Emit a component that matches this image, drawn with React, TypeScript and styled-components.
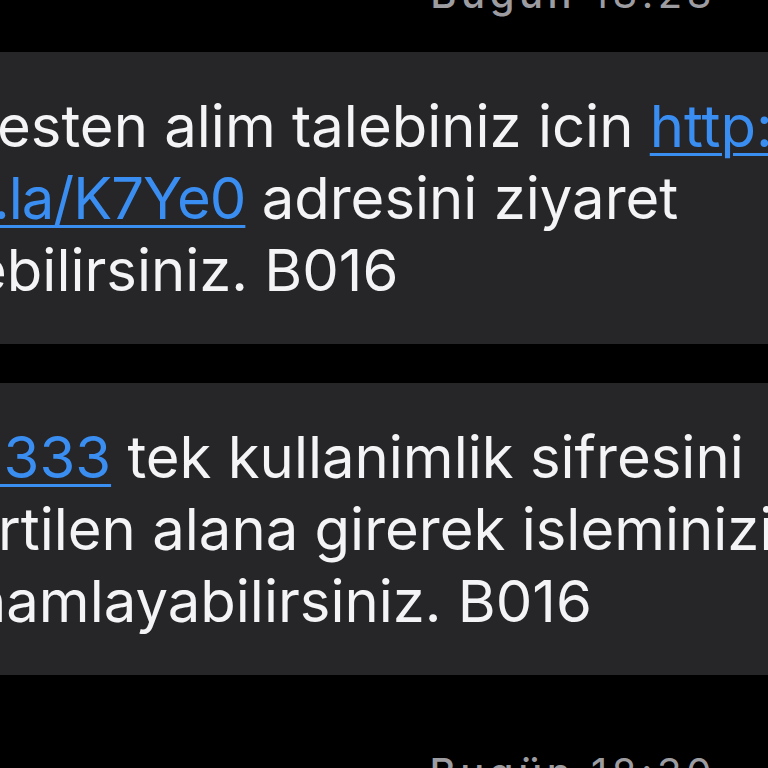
import React from "react";
import styled, { createGlobalStyle } from "styled-components";

const Global = createGlobalStyle`
  html, body { margin: 0; padding: 0; background: #000; }
  body { font-family: Inter, "Noto Sans", "Liberation Sans", sans-serif; }
`;

const Screen = styled.div`
  width: 768px;
  height: 768px;
  overflow: hidden;
  background: #000;
  display: flex;
  flex-direction: column;
`;

const Thread = styled.div`
  display: flex;
  flex-direction: column;
  margin-top: -30px;
`;

const Stamp = styled.div<{ $after: number }>`
  font-size: 40px;
  line-height: 48px;
  letter-spacing: 4.5px;
  color: #9c9ca1;
  text-align: right;
  padding-right: 52px;
  white-space: nowrap;
  margin-bottom: ${(p) => p.$after}px;
  b { font-weight: 500; }
`;

const Bubble = styled.div<{ $after: number }>`
  background: #262628;
  padding: 38px 0;
  margin-bottom: ${(p) => p.$after}px;
  display: flex;
  flex-direction: column;
`;

const Line = styled.div<{ $offset: number }>`
  font-size: 58px;
  line-height: 72px;
  color: #f4f4f6;
  white-space: nowrap;
  margin-left: ${(p) => p.$offset}px;
`;

const Link = styled.span<{ $tight?: boolean }>`
  color: #3a8ef2;
  text-decoration: underline;
  text-decoration-thickness: 3px;
  text-underline-offset: 6px;
  letter-spacing: ${(p) => (p.$tight ? "-1px" : "0")};
`;

export default function App() {
  return (
    <>
      <Global />
      <Screen>
        <Thread>
          <Stamp $after={34}>
            <b>Bugün</b> 18:28
          </Stamp>
          <Bubble $after={39}>
            <Line $offset={-3}>
              esten alim talebiniz icin <Link>http://</Link>
            </Line>
            <Line $offset={-7}>
              <Link $tight>.la/K7Ye0</Link> adresini ziyaret
            </Line>
            <Line $offset={-27}>ebilirsiniz. B016</Line>
          </Bubble>
          <Bubble $after={74}>
            <Line $offset={-20}>
              <Link>1333</Link> tek kullanimlik sifresini
            </Line>
            <Line $offset={-2}>rtilen alana girerek isleminizi</Line>
            <Line $offset={-28}>namlayabilirsiniz. B016</Line>
          </Bubble>
          <Stamp $after={0}>
            <b>Bugün</b> 18:30
          </Stamp>
        </Thread>
      </Screen>
    </>
  );
}
